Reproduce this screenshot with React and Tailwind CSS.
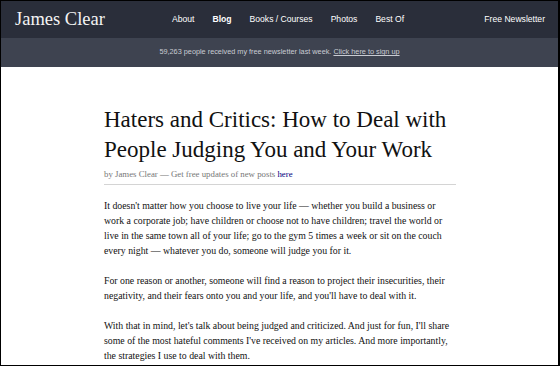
export default function App() {
  const serif = { fontFamily: '"Liberation Serif", "DejaVu Serif", serif' };
  return (
    <div className="w-[560px] h-[366px] overflow-hidden border border-r-2 border-black bg-white">
      <header className="h-[37px] bg-[#2a2e3a] flex items-center pl-[14px] pr-[13px] font-['Liberation_Sans',Arial,sans-serif] text-[8.6px] text-white whitespace-nowrap">
        <div className="w-[157px]">
          <a className="font-['Liberation_Serif',serif] text-[18.5px] leading-none text-[#f4f4f4]">
            James Clear
          </a>
        </div>
        <nav className="flex gap-[18px]">
          <a>About</a>
          <a className="font-bold">Blog</a>
          <a>Books / Courses</a>
          <a>Photos</a>
          <a>Best Of</a>
        </nav>
        <a className="ml-auto">Free Newsletter</a>
      </header>
      <div className="h-[29px] bg-[#3e4350] flex items-center justify-center font-['Liberation_Sans',Arial,sans-serif] text-[7.3px] text-[#c9ccd3] whitespace-nowrap">
        <span>
          59,263 people received my free newsletter last week.{" "}
          <a className="underline">Click here to sign up</a>
        </span>
      </div>
      <main className="w-[352px] ml-[103px] pt-[38px]" style={serif}>
        <h1 className="text-[23px] leading-[30px] text-[#111]">
          Haters and Critics: How to Deal with People Judging You and Your Work
        </h1>
        <p className="mt-[3px] text-[8.8px] leading-[12px] text-[#777] pb-[4px] border-b border-[#d4d4d4]">
          by James Clear — Get free updates of new posts{" "}
          <a className="text-[#000080]">here</a>
        </p>
        <div className="mt-[13px] text-[9.8px] leading-[15px] text-[#111] space-y-[15px] whitespace-nowrap">
          <p>
            It doesn't matter how you choose to live your life — whether you build a business or
            <br />
            work a corporate job; have children or choose not to have children; travel the world or
            <br />
            live in the same town all of your life; go to the gym 5 times a week or sit on the couch
            <br />
            every night — whatever you do, someone will judge you for it.
          </p>
          <p>
            For one reason or another, someone will find a reason to project their insecurities, their
            <br />
            negativity, and their fears onto you and your life, and you'll have to deal with it.
          </p>
          <p>
            With that in mind, let's talk about being judged and criticized. And just for fun, I'll share
            <br />
            some of the most hateful comments I've received on my articles. And more importantly,
            <br />
            the strategies I use to deal with them.
          </p>
        </div>
      </main>
    </div>
  );
}
